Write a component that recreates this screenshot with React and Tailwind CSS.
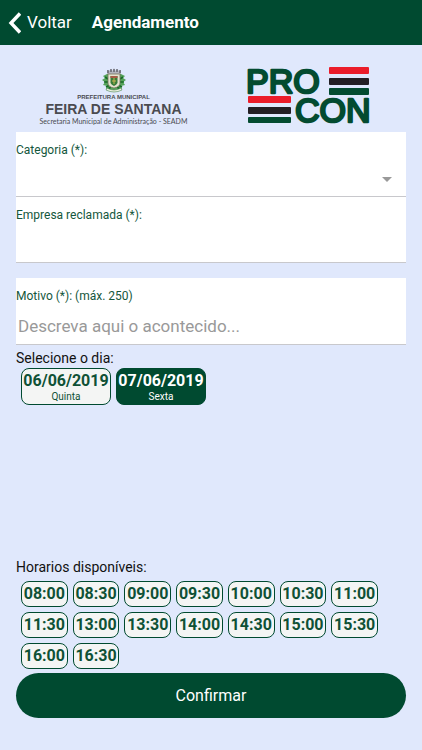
const days = [
  { date: '06/06/2019', name: 'Quinta', selected: false },
  { date: '07/06/2019', name: 'Sexta', selected: true },
];

const times = [
  '08:00', '08:30', '09:00', '09:30', '10:00', '10:30', '11:00',
  '11:30', '13:00', '13:30', '14:00', '14:30', '15:00', '15:30',
  '16:00', '16:30',
];

function Crest() {
  return (
    <svg viewBox="0 0 26 26" className="h-[26px] w-[26px]" aria-hidden="true">
      <path d="M6 6 2 8l2 2-3 2 3 2-2 3 4 1-1 3 5 1 3 2 3-2 5-1-1-3 4-1-2-3 3-2-3-2 2-2-4-2z" fill="#55a25a" />
      <path d="M4 9l3 2M3 14l4 0M5 19l4-2M22 9l-3 2M23 14l-4 0M21 19l-4-2M7 21l3-2M19 21l-3-2" stroke="#176b25" strokeWidth="1.6" />
      <path d="M6 6V2l2 1 2-2 1.500 2L13 0l1.500 3L16 1l2 2 2-1v4z" fill="#b4b4bd" />
      <path d="M7 2v3M10 1v3M13 1v3M16 1v3M19 2v3" stroke="#3c3c46" strokeWidth="1" />
      <path d="M7 6h12v9q0 4-6 5-6-1-6-5z" fill="#e5e2cf" stroke="#77745d" strokeWidth="0.800" />
      <path d="M9.500 8h7v7q-1 2-3.500 3-2.500-1-3.500-3z" fill="#397c38" />
      <path d="M9.500 8h7v2h-7z" fill="#a65b45" />
      <path d="M13 10v6M11 13h4" stroke="#c8b552" />
      <path d="M6 20q7 4 14 0l1 2q-8 4-16 0z" fill="#eef1e2" stroke="#4b8650" strokeWidth="0.600" />
    </svg>
  );
}

function CityLogo() {
  return (
    <div className="flex flex-col items-center whitespace-nowrap font-['Liberation_Sans',Arial,sans-serif] text-[#4a4b50]">
      <Crest />
      <span className="text-[6px] leading-[7px] font-bold">PREFEITURA MUNICIPAL</span>
      <span className="text-[14px] leading-[16px] font-bold">FEIRA DE SANTANA</span>
      <span className="font-[Lato,sans-serif] text-[7px] leading-[9px]">Secretaria Municipal de Administração - SEADM</span>
    </div>
  );
}

function ProconLogo() {
  return (
    <svg viewBox="-3 -7 130 72" className="h-[72px] w-[130px]" role="img" aria-label="PROCON">
      <g fontFamily="'Liberation Sans', Arial, sans-serif" fontSize="34" fill="#034b30" stroke="#034b30" strokeWidth="2.400" strokeLinejoin="round">
        <text x="-1" y="26">PRO</text>
        <text x="48" y="55">CON</text>
      </g>
      <g fill="#eb1c2a">
        <rect x="82" y="0" width="40" height="7" rx="1" />
        <rect x="1" y="29" width="43" height="7" rx="1" />
      </g>
      <g fill="#231f24">
        <rect x="82" y="11" width="40" height="7" rx="1" />
        <rect x="1" y="40" width="43" height="7" rx="1" />
      </g>
      <g fill="#034b30">
        <rect x="82" y="21" width="40" height="7" rx="1" />
        <rect x="1" y="50" width="43" height="6" rx="1" />
      </g>
    </svg>
  );
}

export default function App() {
  return (
    <div className="min-h-screen bg-[#e0e8fc] font-[Roboto,sans-serif] text-[#111]">
      <header className="flex h-[45px] items-center bg-[#004a30] px-2 text-white">
        <button type="button" className="flex items-center gap-1.5 text-[17px]">
          <svg viewBox="0 0 13 22" className="h-[22px] w-[13px]" fill="none" aria-hidden="true">
            <path d="M12 1.500 3 11l9 9.500" stroke="white" strokeWidth="3.400" />
          </svg>
          Voltar
        </button>
        <h1 className="ml-5 text-[17px] font-bold">Agendamento</h1>
      </header>

      <main className="px-4 pt-[15px]">
        <div className="grid h-[72px] grid-cols-2 justify-items-center">
          <div className="pt-2"><CityLogo /></div>
          <ProconLogo />
        </div>

        <form>
          <div className="relative flex h-[65px] flex-col border-b border-[#c8c8cc] bg-white pt-[10px]">
            <label htmlFor="categoria" className="text-xs leading-4 text-[#14573c]">Categoria (*):</label>
            <select id="categoria" className="w-full flex-1 appearance-none bg-transparent text-[17px]" defaultValue="">
              <option value=""></option>
            </select>
            <svg viewBox="0 0 10 5" className="pointer-events-none absolute right-[14px] bottom-[14px] h-[5px] w-[10px]" aria-hidden="true">
              <path d="M0 0h10L5 5z" fill="#999" />
            </svg>
          </div>
          <div className="flex h-[66px] flex-col border-b border-[#c8c8cc] bg-white pt-[10px]">
            <label htmlFor="empresa" className="text-xs leading-4 text-[#14573c]">Empresa reclamada (*):</label>
            <input id="empresa" type="text" className="w-full flex-1 bg-transparent px-0.5 text-[17px]" />
          </div>
          <div className="mt-[15px] flex h-[67px] flex-col border-b border-[#c8c8cc] bg-white pt-[10px]">
            <label htmlFor="motivo" className="text-xs leading-4 text-[#14573c]">Motivo (*): (máx. 250)</label>
            <textarea id="motivo" rows={1} maxLength={250} placeholder="Descreva aqui o acontecido..." className="w-full flex-1 resize-none bg-transparent px-0.5 pt-2.5 text-[17px] leading-6 placeholder:text-[#999]" />
          </div>

          <section className="min-h-[213px] pt-1">
            <h2 className="text-sm leading-[19px]">Selecione o dia:</h2>
            <div className="flex flex-wrap gap-[5px] pl-[5px]">
              {days.map((d) => (
                <button
                  key={d.date}
                  type="button"
                  aria-pressed={d.selected}
                  className={
                    'flex h-[37px] w-[90px] flex-col items-center justify-center rounded-lg border border-[#004a30] ' +
                    (d.selected ? 'bg-[#004a30] text-white' : 'bg-[#f4f5f4] text-[#0f5136]')
                  }
                >
                  <span className="text-base leading-5 font-bold">{d.date}</span>
                  <span className="text-[10px] leading-3">{d.name}</span>
                </button>
              ))}
            </div>
          </section>

          <section>
            <h2 className="text-sm leading-[19px]">Horarios disponíveis:</h2>
            <div className="mt-1 grid max-w-[362px] grid-cols-7 gap-x-[5px] gap-y-[5px] pl-[5px]">
              {times.map((t) => (
                <button key={t} type="button" className="h-[26px] rounded-lg border border-[#004a30] bg-[#f4f5f4] text-base leading-6 font-bold text-[#0f5136]">
                  {t}
                </button>
              ))}
            </div>
          </section>

          <button type="submit" className="mt-1 h-[45px] w-full rounded-full bg-[#004a30] text-base text-white">
            Confirmar
          </button>
        </form>
      </main>
    </div>
  );
}
